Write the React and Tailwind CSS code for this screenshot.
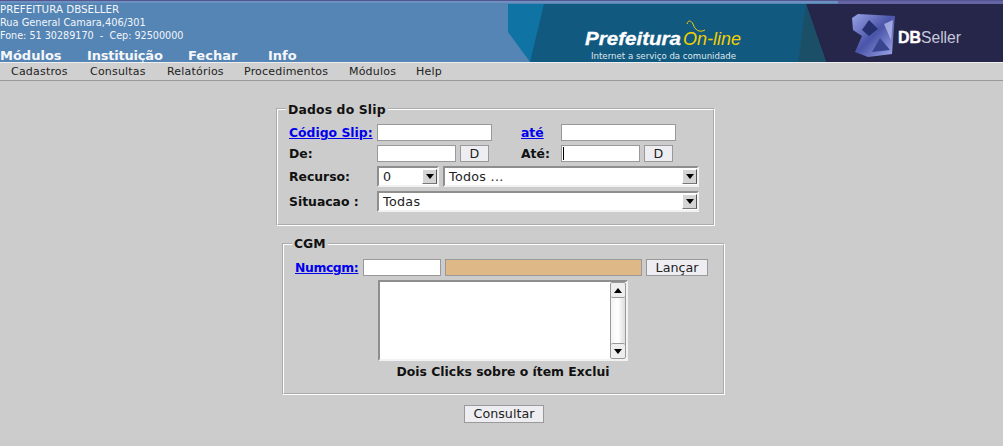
import React from "react";

const Arrow = ({ up }) => (
  <svg width="8" height="5" viewBox="0 0 8 5" className="block"><polygon points={up ? "4,0 8,5 0,5" : "0,0 8,0 4,5"} fill="#000" /></svg>
);

const Select = ({ w, value }) => (
  <div className={`${w} h-[21px] flex items-stretch bg-white border-2 border-t-[#8e8e8e] border-l-[#8e8e8e] border-r-[#f2f2f2] border-b-[#f2f2f2] pl-[4px] text-[12.7px] leading-[16px] text-[#222] shrink-0`}>
    <span className="flex-1 tracking-[0.3px] pt-[1px]">{value}</span>
    <span className="w-[15px] my-[1px] flex items-center justify-center bg-[#d4d4d4] border border-t-white border-l-white border-r-[#555] border-b-[#777]"><Arrow /></span>
  </div>
);

const Input = ({ w, bg = "bg-white", children }) => (
  <div className={`${w} h-[17px] ${bg} border border-[#999] shrink-0 flex items-center pl-[1px]`}>{children}</div>
);

const Btn = ({ w, children }) => (
  <div className={`${w} h-[17px] bg-[#eeeef2] border border-[#999] text-[12.7px] leading-[15px] text-[#222] flex items-center justify-center shrink-0`}>{children}</div>
);

const A = ({ children, cls = "" }) => <a className={`text-[#0000ee] underline font-bold text-[12.4px] leading-[17px] whitespace-nowrap shrink-0 ${cls}`}>{children}</a>;
const L = ({ children, cls = "" }) => <span className={`font-bold text-[12.4px] leading-[17px] text-[#111] whitespace-nowrap shrink-0 ${cls}`}>{children}</span>;

const Banner = () => (
  <svg width="495" height="58" viewBox="508 4 495 58" className="block shrink-0">
    <defs>
      <linearGradient id="cube" x1="0" y1="0" x2="1" y2="1">
        <stop offset="0" stopColor="#9aa4e8" />
        <stop offset="0.5" stopColor="#4a54a8" />
        <stop offset="1" stopColor="#a4adf0" />
      </linearGradient>
    </defs>
    <rect x="508" y="4" width="495" height="58" fill="#0f74a4" />
    <polygon points="508,32 508,62 530,62" fill="#5585b5" />
    <polygon points="544,4 806,4 826,62 530,62" fill="#125980" />
    <polygon points="806,4 1003,4 1003,62 826,62" fill="#26264a" />
    <polygon points="806,4 826,62 798,62" fill="#1b4f68" />
    <path d="M852 18 L858 14 L895 16 L894 26 L892 54 L868 57 L855 52 L862 36 L853 30 Z" fill="url(#cube)" />
    <path d="M862 30 L869 20 L878 29 L869 36 Z" fill="#26306e" />
    <path d="M872 52 L880 38 L890 50 Z" fill="#3a4590" />
    <path d="M884 24 L893 20 L891 40 Z" fill="#c0c6f4" opacity="0.7" />
    <path d="M687 24 C688 20 691 20 693 24 C695 30 699 33 705 30" fill="none" stroke="#f2d000" strokeWidth="1" />
    <text x="585" y="45" fill="#fff" stroke="#fff" strokeWidth="0.3" fontFamily="'Liberation Sans'" fontWeight="700" fontStyle="italic" fontSize="18" textLength="96" lengthAdjust="spacingAndGlyphs">Prefeitura</text>
    <text x="683" y="45" fill="#f2d000" fontFamily="'Liberation Sans'" fontStyle="italic" fontSize="18" textLength="58" lengthAdjust="spacingAndGlyphs">On-line</text>
    <text x="591" y="59" fill="#dfe8ee" fontFamily="'DejaVu Sans'" fontSize="9" textLength="145" lengthAdjust="spacingAndGlyphs">Internet a serviço da comunidade</text>
    <text x="898" y="43" fill="#fff" stroke="#fff" strokeWidth="0.4" fontFamily="'Liberation Sans'" fontWeight="700" fontSize="16" textLength="23" lengthAdjust="spacingAndGlyphs">DB</text>
    <text x="921" y="43" fill="#c8c8dc" fontFamily="'Liberation Sans'" fontSize="16" textLength="40" lengthAdjust="spacingAndGlyphs">Seller</text>
  </svg>
);

export default function App() {
  return (
    <div className="w-[1003px] h-[446px] overflow-hidden bg-[#cccccc] font-['DejaVu_Sans',sans-serif] text-black">
      <header className="h-[62px] bg-[#5585b5] flex flex-col">
        <div className="h-[4px] flex shrink-0 flex-col">
          <div className="h-[1px] bg-[#55558f]" />
          <div className="h-[3px] flex">
            <div className="w-[838px] h-[2px] bg-[#6c90c0]" />
            <div className="flex-1 h-[3px] bg-[#6565a5]" />
          </div>
        </div>
        <div className="flex-1 flex justify-between min-h-0">
          <div className="flex flex-col text-white">
            <div className="leading-[13px] text-[#f2f5fa] -mt-[1px]">
              <p className="text-[10.3px]">PREFEITURA DBSELLER</p>
              <p className="text-[9.8px]">Rua General Camara,406/301</p>
              <p className="text-[9.65px] whitespace-pre">Fone: 51 30289170  -  Cep: 92500000</p>
            </div>
            <nav className="flex mt-[6px] text-[13px] leading-[16px] font-bold text-[#f5f7fa]">
              <span className="w-[87px]">Módulos</span>
              <span className="w-[101px] tracking-[-0.2px]">Instituição</span>
              <span className="w-[80px]">Fechar</span>
              <span>Info</span>
            </nav>
          </div>
          <Banner />
        </div>
      </header>

      <div className="h-[19px] bg-[#d0d0d0] border-t border-[#eeeeee] border-b border-b-[#999] flex items-center pl-[11px] pt-[1px] text-[11px] text-[#222] tracking-[0.2px]">
        <span className="w-[79px]">Cadastros</span>
        <span className="w-[77px]">Consultas</span>
        <span className="w-[77px]">Relatórios</span>
        <span className="w-[105px]">Procedimentos</span>
        <span className="w-[67px]">Módulos</span>
        <span>Help</span>
      </div>

      <main className="flex flex-col items-center pt-[20px]">
        <fieldset className="w-[439px] h-[125px] ml-[-12px] border-2 [border-style:groove] border-white pl-[11px] pr-[13px] min-w-0">
          <legend className="relative top-[1px] font-bold text-[12.4px] leading-[16px] tracking-[0.15px] text-[#111] px-[2px] ml-[-3px]">Dados do Slip</legend>
          <div className="flex flex-col mt-[7px]">
            <div className="flex items-center h-[17px]">
              <A cls="w-[88px]">Código Slip:</A>
              <Input w="w-[115px]" />
              <A cls="ml-[29px] w-[40px]">até</A>
              <Input w="w-[115px]" />
            </div>
            <div className="flex items-center h-[17px] mt-[4px]">
              <L cls="w-[88px]">De:</L>
              <Input w="w-[79px]" />
              <Btn w="w-[29px] ml-[4px]">D</Btn>
              <L cls="ml-[32px] w-[40px]">Até:</L>
              <Input w="w-[79px]"><span className="block w-[1px] h-[13px] bg-black" /></Input>
              <Btn w="w-[29px] ml-[4px]">D</Btn>
            </div>
            <div className="flex items-center h-[21px] mt-[4px]">
              <L cls="w-[88px]">Recurso:</L>
              <Select w="w-[62px]" value="0" />
              <span className="w-[4px] shrink-0" />
              <Select w="w-[256px]" value="Todos ..." />
            </div>
            <div className="flex items-center h-[21px] mt-[4px]">
              <L cls="w-[88px]">Situacao :</L>
              <Select w="w-[322px]" value="Todas" />
            </div>
          </div>
        </fieldset>

        <fieldset className="w-[443px] h-[158px] mt-[11px] ml-[4px] border-2 [border-style:groove] border-white pl-[11px] pr-[12px] min-w-0">
          <legend className="font-bold text-[12.4px] leading-[13px] text-[#111] px-[2px] ml-[-3px]">CGM</legend>
          <div className="flex items-center h-[17px] mt-[9px]">
            <A cls="w-[68px] tracking-[-0.4px]">Numcgm:</A>
            <Input w="w-[78px]" />
            <span className="w-[4px] shrink-0" />
            <Input w="w-[197px]" bg="bg-[#deb887]" />
            <span className="w-[4px] shrink-0" />
            <Btn w="w-[62px]">Lançar</Btn>
          </div>
          <div className="ml-[83px] mt-[4px] w-[250px] h-[81px] bg-white border-2 border-t-[#8e8e8e] border-l-[#8e8e8e] border-r-[#f2f2f2] border-b-[#f2f2f2] flex justify-end">
            <div className="w-[16px] h-full flex flex-col bg-gradient-to-r from-[#f4f4f4] via-white to-[#dddddd] border border-[#999] rounded-[2px]">
              <div className="h-[15px] border-b border-[#999] rounded-[2px] bg-[#eeeeee] flex items-center justify-center shrink-0"><Arrow up /></div>
              <div className="flex-1" />
              <div className="h-[15px] border-t border-[#999] rounded-[2px] bg-[#eeeeee] flex items-center justify-center shrink-0"><Arrow /></div>
            </div>
          </div>
          <p className="font-bold text-[12.4px] leading-[16px] text-[#111] text-center mt-[3px] whitespace-nowrap">Dois Clicks sobre o ítem Exclui</p>
        </fieldset>

        <div className="mt-[10px] w-[80px] h-[18px] ml-[5px] bg-[#eeeef2] border border-[#999] text-[12.7px] leading-[16px] text-[#222] flex items-center justify-center">Consultar</div>
      </main>
    </div>
  );
}
